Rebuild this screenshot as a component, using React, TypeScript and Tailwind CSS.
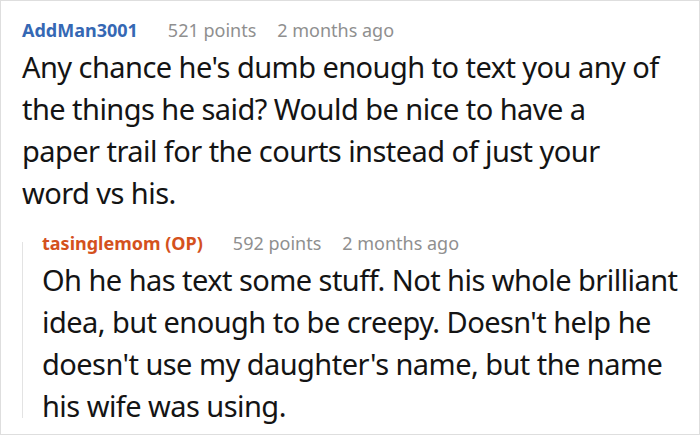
import React from 'react';

const FONT = { fontFamily: '"Noto Sans", "Open Sans", sans-serif' };

interface MetaProps {
  author: string;
  authorClass: string;
  points: number;
  age: string;
}

const Meta: React.FC<MetaProps> = ({ author, authorClass, points, age }) => (
  <div className="flex items-baseline text-[18px] leading-[24px] whitespace-nowrap">
    <span className={`font-bold ${authorClass}`}>{author}</span>
    <span className="ml-[30px] text-[#8f8f8f]">{points} points</span>
    <span className="ml-[21px] text-[#8f8f8f]">{age}</span>
  </div>
);

const Body: React.FC<{ children: React.ReactNode }> = ({ children }) => (
  <p className="mt-1 text-[29px] leading-[42px] tracking-[-0.55px] text-[#141414]">{children}</p>
);

export default function App() {
  return (
    <div className="w-[700px] h-[436px] bg-white" style={FONT}>
      <div className="h-[435px] border border-[#dedede] pl-[21px] pr-[15px] pt-[17px]">
        {/* top-level comment */}
        <Meta author="AddMan3001" authorClass="text-[#3568b4]" points={521} age="2 months ago" />
        <Body>
          Any chance he's dumb enough to text you any of
          <br />
          the things he said? Would be nice to have a
          <br />
          paper trail for the courts instead of just your
          <br />
          word vs his.
        </Body>

        {/* reply */}
        <div className="mt-[17px] flex items-stretch">
          <div className="w-px shrink-0 bg-[#e3e3e3] mt-[11px] mb-[9px]" />
          <div className="pl-[19px] min-w-0">
            <Meta author="tasinglemom (OP)" authorClass="text-[#d4511d]" points={592} age="2 months ago" />
            <Body>
              Oh he has text some stuff. Not his whole brilliant idea, but enough to be creepy. Doesn't help he
              doesn't use my daughter's name, but the name his wife was using.
            </Body>
          </div>
        </div>
      </div>
    </div>
  );
}
